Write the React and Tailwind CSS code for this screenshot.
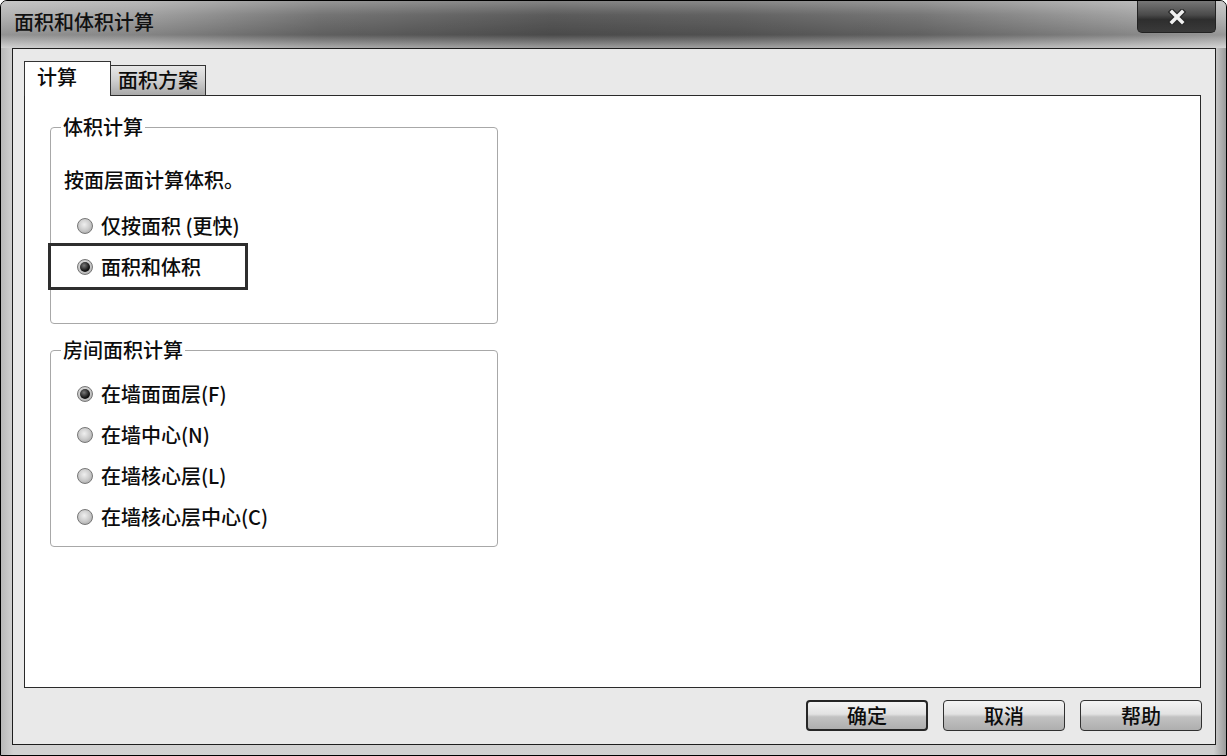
import React from "react";

const FONT = { fontFamily: '"Noto Sans CJK SC", "Noto Sans", sans-serif' };

function Radio({ checked }) {
  return (
    <span className="w-[16px] h-[16px] rounded-full border border-[#767676] bg-[radial-gradient(circle_at_45%_40%,#efefef_0%,#cbcbcb_50%,#9a9a9a_100%)] flex items-center justify-center shrink-0">
      {checked && (
        <span className="w-[10px] h-[10px] rounded-full bg-[radial-gradient(circle_at_40%_35%,#7a7a7a_0%,#151515_60%,#000_100%)]" />
      )}
    </span>
  );
}

function RadioRow({ checked, label, className = "" }) {
  return (
    <div className={"flex items-center gap-[8px] " + className}>
      <Radio checked={checked} />
      <span className="text-[20px] leading-[24px] text-[#0c0c0c] font-medium">{label}</span>
    </div>
  );
}

function Button({ children, def }) {
  return (
    <button
      className={
        "w-[122px] h-[31px] rounded-[4px] flex items-center justify-center text-[20px] leading-[24px] font-medium text-[#0c0c0c] bg-[linear-gradient(180deg,#f4f4f4_0%,#e2e2e2_45%,#c2c2c2_55%,#aeaeae_100%)] " +
        (def ? "border-2 border-[#262626]" : "border border-[#303030]")
      }
    >
      {children}
    </button>
  );
}

export default function App() {
  return (
    <div className="w-[1227px] h-[756px] bg-white" style={FONT}>
      <div className="w-full h-full border border-black rounded-t-[7px] overflow-hidden flex flex-col bg-[linear-gradient(90deg,#b8b8b8_0%,#d2d2d2_1%,#cfcfcf_99%,#9a9a9a_100%)]">
        {/* title bar */}
        <div className="h-[47px] shrink-0 flex items-start bg-[linear-gradient(180deg,rgba(255,255,255,0.25)_0%,rgba(255,255,255,0)_30%,rgba(0,0,0,0.18)_72%,rgba(255,255,255,0.4)_100%),linear-gradient(90deg,#b4b4b4_0%,#a0a0a0_12%,#747474_26%,#5a5a5a_45%,#626262_60%,#767676_75%,#a2a2a2_92%,#b8b8b8_100%)]">
          <div className="pl-[13px] pt-[9px] text-[20px] leading-[24px] font-medium text-[#111]">
            面积和体积计算
          </div>
          <div className="ml-auto mr-[10px] w-[79px] h-[32px] rounded-b-[5px] border border-t-0 border-[#222] bg-[linear-gradient(180deg,#777_0%,#4a4a4a_45%,#2e2e2e_60%,#3a3a3a_100%)] flex items-center justify-center">
            <svg width="22" height="16" viewBox="0 0 22 16">
              <path d="M6 3 L16 13 M16 3 L6 13" stroke="#2a2a2a" strokeWidth="6" strokeLinecap="square" />
              <path d="M6 3 L16 13 M16 3 L6 13" stroke="#f0f0f0" strokeWidth="3.5" strokeLinecap="square" />
            </svg>
          </div>
        </div>

        {/* frame body */}
        <div className="flex-1 flex pl-[11px] pr-[10px] pb-[10px]">
          <div className="flex-1 border border-[#1e1e1e] bg-[#e9e9e9] flex flex-col pt-[12px] pl-[11px] pr-[14px]">
            {/* tabs */}
            <div className="h-[34px] flex items-end shrink-0">
              <div className="relative z-10 w-[87px] h-[35px] -mb-px bg-white border border-b-0 border-[#333] pl-[12px] pt-[3px] text-[20px] leading-[24px] font-medium text-[#0c0c0c]">
                计算
              </div>
              <div className="w-[95px] h-[30px] border border-l-0 border-b-0 border-[#333] bg-[linear-gradient(180deg,#e8e8e8_0%,#cfcfcf_50%,#a9a9a9_100%)] pl-[7px] pt-[2px] text-[20px] leading-[24px] font-medium text-[#0c0c0c]">
                面积方案
              </div>
            </div>

            {/* panel */}
            <div className="flex-1 bg-white border border-[#2a2a2a] pl-[25px] pt-[19px]">
              <fieldset className="w-[448px] border border-[#a8a8a8] rounded-[4px] p-0 m-0">
                <legend className="ml-[10px] px-[2px] text-[20px] leading-[24px] font-medium text-[#0c0c0c]">体积计算</legend>
                <div className="pt-[29px] pb-[33px]">
                  <div className="pl-[13px] text-[20px] leading-[24px] font-medium text-[#0c0c0c]">按面层面计算体积。</div>
                  <RadioRow className="mt-[22px] pl-[26px] h-[24px]" label="仅按面积 (更快)" />
                  <div className="mt-[5px] -ml-[3px] w-[200px] h-[47px] border-[3px] border-[#2e2e2e] flex items-center pl-[26px]">
                    <RadioRow checked label="面积和体积" />
                  </div>
                </div>
              </fieldset>

              <fieldset className="mt-[14px] w-[448px] border border-[#a8a8a8] rounded-[4px] p-0 m-0">
                <legend className="ml-[10px] px-[2px] text-[20px] leading-[24px] font-medium text-[#0c0c0c]">房间面积计算</legend>
                <div className="pt-[11px] pb-[9px] pl-[26px]">
                  <RadioRow checked className="h-[41px]" label="在墙面面层(F)" />
                  <RadioRow className="h-[41px]" label="在墙中心(N)" />
                  <RadioRow className="h-[41px]" label="在墙核心层(L)" />
                  <RadioRow className="h-[41px]" label="在墙核心层中心(C)" />
                </div>
              </fieldset>
            </div>

            {/* buttons */}
            <div className="h-[56px] shrink-0 flex items-start justify-end gap-[15px] pt-[12px] -mr-[1px]">
              <Button def>确定</Button>
              <Button>取消</Button>
              <Button>帮助</Button>
            </div>
          </div>
        </div>
      </div>
    </div>
  );
}
